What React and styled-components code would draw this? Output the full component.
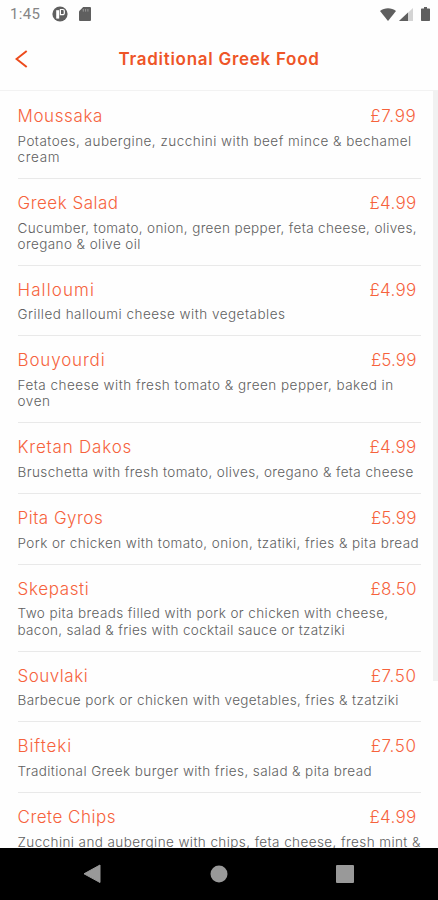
import React from 'react'
import styled, { createGlobalStyle } from 'styled-components'

// track = letter spacing in px, tuned so every string keeps its width
const menu = [
  {
    name: 'Moussaka',
    track: 0.6,
    price: '£7.99',
    priceTrack: 0.7,
    lines: [
      {
        text: 'Potatoes, aubergine, zucchini with beef mince & bechamel',
        track: 0.48,
      },
      { text: 'cream', track: 0.7 },
    ],
  },
  {
    name: 'Greek Salad',
    track: 0.5,
    price: '£4.99',
    priceTrack: 0.3,
    lines: [
      {
        text: 'Cucumber, tomato, onion, green pepper, feta cheese, olives,',
        track: 0.35,
      },
      { text: 'oregano & olive oil', track: 0.42 },
    ],
  },
  {
    name: 'Halloumi',
    track: 1.1,
    price: '£4.99',
    priceTrack: 0.3,
    lines: [{ text: 'Grilled halloumi cheese with vegetables', track: 0.49 }],
  },
  {
    name: 'Bouyourdi',
    track: 0.85,
    price: '£5.99',
    priceTrack: 0.1,
    lines: [
      {
        text: 'Feta cheese with fresh tomato & green pepper, baked in',
        track: 0.48,
      },
      { text: 'oven', track: 0.6 },
    ],
  },
  {
    name: 'Kretan Dakos',
    track: 0.8,
    price: '£4.99',
    priceTrack: 0.3,
    lines: [
      {
        text: 'Bruschetta with fresh tomato, olives, oregano & feta cheese',
        track: 0.4,
      },
    ],
  },
  {
    name: 'Pita Gyros',
    track: 0.5,
    price: '£5.99',
    priceTrack: 0.1,
    lines: [
      {
        text: 'Pork or chicken with tomato, onion, tzatiki, fries & pita bread',
        track: 0.42,
      },
    ],
  },
  {
    name: 'Skepasti',
    track: 0.65,
    price: '£8.50',
    priceTrack: 0.1,
    lines: [
      {
        text: 'Two pita breads filled with pork or chicken with cheese,',
        track: 0.4,
      },
      {
        text: 'bacon, salad & fries with cocktail sauce or tzatziki',
        track: 0.32,
      },
    ],
  },
  {
    name: 'Souvlaki',
    track: 0.5,
    price: '£7.50',
    priceTrack: 0.6,
    lines: [
      {
        text: 'Barbecue pork or chicken with vegetables, fries & tzatziki',
        track: 0.385,
      },
    ],
  },
  {
    name: 'Bifteki',
    track: 0.9,
    price: '£7.50',
    priceTrack: 0.6,
    lines: [
      {
        text: 'Traditional Greek burger with fries, salad & pita bread',
        track: 0.4,
      },
    ],
  },
  {
    name: 'Crete Chips',
    track: 0.5,
    price: '£4.99',
    priceTrack: 0.3,
    lines: [
      {
        text: 'Zucchini and aubergine with chips, feta cheese, fresh mint &',
        track: 0.41,
      },
    ],
  },
]

const App = () => {
  return (
    <Screen>
      <GlobalStyle />
      <StatusBar>
        <Clock>1:45</Clock>
        <svg width='16' height='16' viewBox='0 0 16 16'>
          <circle cx='8' cy='8' r='7.6' fill='#5f5f5f' />
          <path d='M4.2 4.2h3v8.400h-3z' fill='#fff' />
          <path
            d='M8.400 3.500h2.400a1.500 1.500 0 0 1 1.500 1.500v2.200a1.500 1.500 0 0 1-1.500 1.500H8.400z'
            fill='none'
            stroke='#fff'
            strokeWidth='1.2'
          />
        </svg>
        <CardIcon width='12' height='14' viewBox='0 0 12 14'>
          <path
            d='M4.2 0H11a1 1 0 0 1 1 1v12a1 1 0 0 1-1 1H1a1 1 0 0 1-1-1V4.2z'
            fill='#5f5f5f'
          />
          <path d='M4.3 2v2.6M6.6 2v2.6M8.9 2v2.6' stroke='#999' />
        </CardIcon>
        <Signals>
          <svg width='16' height='13' viewBox='0 0 16 13'>
            <path d='M0 3C4.5-.8 11.500-.8 16 3L8 13z' fill='#5f5f5f' />
          </svg>
          <svg width='14' height='13' viewBox='0 0 14 13'>
            <path d='M14 0v13H0z' fill='#d4d4d4' />
            <path d='M9 4.600V13H0z' fill='#5f5f5f' />
          </svg>
          <Battery width='9' height='14' viewBox='0 0 9 14'>
            <path
              d='M3 0h3v1.500h2.300q.7 0 .7.7v11.100q0 .7-.7.7H.7q-.7 0-.7-.7V2.200q0-.7.7-.7H3z'
              fill='#5f5f5f'
            />
          </Battery>
        </Signals>
      </StatusBar>
      <Header>
        <BackButton aria-label='Back'>
          <svg width='13' height='18' viewBox='0 0 13 18'>
            <path
              d='M11.700 1L1.500 9l10.200 8'
              fill='none'
              stroke='#ec4a1b'
              strokeWidth='2'
            />
          </svg>
        </BackButton>
        <Title>Traditional Greek Food</Title>
      </Header>
      <Content>
        <MenuList>
          {menu.map((item) => (
            <MenuItem key={item.name}>
              <ItemHeading>
                <ItemName $track={item.track}>{item.name}</ItemName>
                <Price $track={item.priceTrack}>{item.price}</Price>
              </ItemHeading>
              <Description>
                {item.lines.map((line) => (
                  <Line key={line.text} $track={line.track}>
                    {line.text}
                  </Line>
                ))}
              </Description>
            </MenuItem>
          ))}
        </MenuList>
        <ScrollThumb />
      </Content>
      <NavBar>
        <svg width='18' height='20' viewBox='0 0 18 20'>
          <path d='M17 1v17.500L1 9.800z' fill='#999' stroke='#999' />
        </svg>
        <svg width='18' height='18' viewBox='0 0 18 18'>
          <circle cx='9' cy='9' r='8.500' fill='#999' />
        </svg>
        <svg width='18' height='18' viewBox='0 0 18 18'>
          <rect width='18' height='18' rx='1' fill='#999' />
        </svg>
      </NavBar>
    </Screen>
  )
}

const GlobalStyle = createGlobalStyle`
  * {
    box-sizing: border-box;
  }

  body {
    margin: 0;
    background: #fefefe;
    font-family: Inter, 'Open Sans', sans-serif;
  }
`

const Screen = styled.div`
  display: flex;
  flex-direction: column;
  width: 438px;
  height: 900px;
  background: #fefefe;
  overflow: hidden;
`

const StatusBar = styled.div`
  display: flex;
  align-items: center;
  height: 28px;
  padding: 0 8px 0 10px;
  flex-shrink: 0;

  svg {
    display: block;
  }
`

const Clock = styled.span`
  width: 42px;
  font-family: Roboto, sans-serif;
  font-size: 15px;
  letter-spacing: 0.3px;
  color: #858585;
`

const CardIcon = styled.svg`
  margin-left: 11px;
`

const Signals = styled.div`
  display: flex;
  align-items: center;
  gap: 3px;
  margin-left: auto;
`

const Battery = styled.svg`
  margin-left: 5px;
`

const Header = styled.header`
  display: grid;
  grid-template-columns: 40px 1fr 40px;
  align-items: center;
  height: 63px;
  border-bottom: 1px solid #f2f2f2;
  flex-shrink: 0;
`

const BackButton = styled.button`
  display: flex;
  padding: 0 0 0 15px;
  border: 0;
  background: none;
`

const Title = styled.h1`
  margin: 0;
  font-size: 17px;
  font-weight: 600;
  line-height: 24px;
  letter-spacing: 0.72px;
  text-align: center;
  white-space: nowrap;
  color: #ee5527;
`

const Content = styled.main`
  display: flex;
  flex: 1;
  min-height: 0;
  overflow: hidden;
`

const MenuList = styled.div`
  flex: 1;
  padding: 1px 12px 0 17.5px;
`

const MenuItem = styled.section`
  padding: 12px 0 12.8px;
  border-bottom: 1px solid #e9e9e9;
`

const ItemHeading = styled.div`
  display: flex;
  justify-content: space-between;
  height: 28.7px;
  padding-right: 4.5px;
  font-size: 17px;
  font-weight: 300;
  line-height: 24px;
  color: #f6623c;
`

const ItemName = styled.h2`
  margin: 0;
  font: inherit;
  letter-spacing: ${(props) => props.$track}px;
`

const Price = styled.span`
  letter-spacing: ${(props) => props.$track}px;
`

const Description = styled.p`
  margin: 0;
  font-size: 13.5px;
  font-weight: 300;
  line-height: 16.2px;
  color: #606060;
`

const Line = styled.span`
  display: block;
  white-space: nowrap;
  letter-spacing: ${(props) => props.$track}px;
`

const ScrollThumb = styled.div`
  width: 5px;
  height: 590px;
  background: #f1f1f1;
`

const NavBar = styled.nav`
  display: flex;
  align-items: center;
  justify-content: space-between;
  height: 52px;
  padding: 0 84px 0 83px;
  background: #000;
  flex-shrink: 0;
`

export default App
